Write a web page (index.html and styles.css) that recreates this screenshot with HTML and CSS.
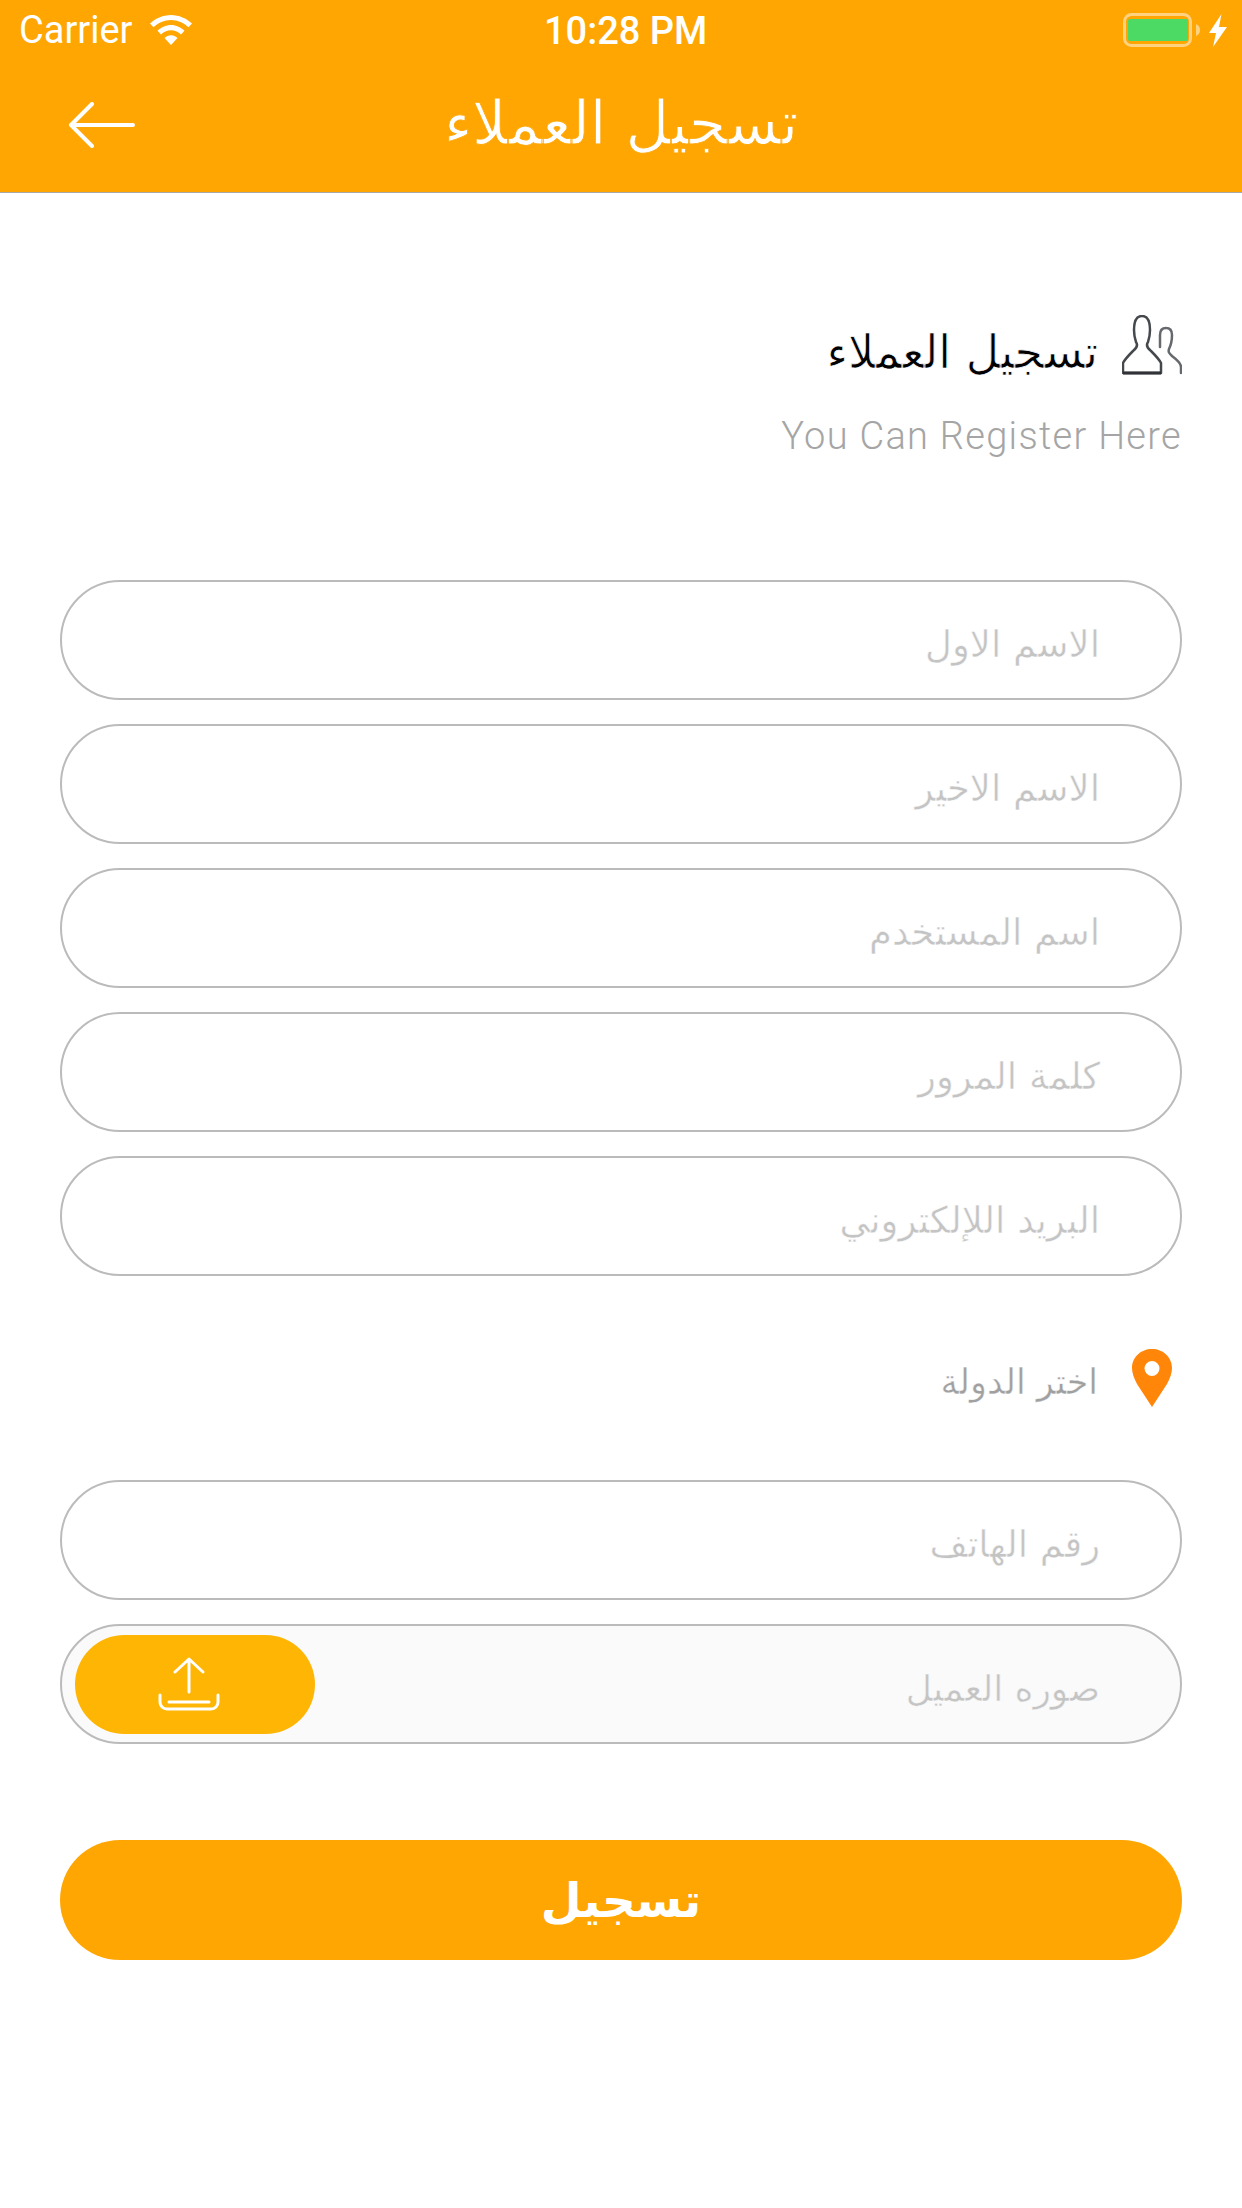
FILE: index.html
```html
<!DOCTYPE html>
<html lang="ar">
<head>
<meta charset="utf-8">
<title>تسجيل العملاء</title>
<link rel="stylesheet" href="styles.css">
</head>
<body>
<header class="appbar">
  <div class="status">
    <div class="status-left">
      <span class="carrier">Carrier</span>
      <svg class="wifi" width="42" height="30" viewBox="0 0 42 30"><path d="M0 8.500C5.500 3.500 13 0 21 0s15.500 3.500 21 8.500l-3.500 3.700C33.800 8 27.800 5 21 5S8.200 8 3.500 12.200z" fill="#fff"/><path d="M7.500 15.800C11 12.500 15.800 10 21 10s10 2.500 13.500 5.800L31 19.500c-2.500-2.300-6-4.200-10-4.200s-7.500 1.900-10 4.200z" fill="#fff"/><path d="M14.500 23c1.700-1.500 4-2.700 6.500-2.700s4.800 1.200 6.500 2.700L21 30z" fill="#fff"/></svg>
    </div>
    <span class="time">10:28 PM</span>
    <div class="status-right">
      <svg width="77" height="34" viewBox="0 0 77 34"><rect x="1.500" y="1.500" width="66" height="31" rx="7" fill="none" stroke="#ffd27f" stroke-width="3"/><rect x="5" y="6" width="60" height="22" rx="2" fill="#4cd964"/><path d="M73 11c2.500 1 4 3 4 6s-1.500 5-4 6z" fill="#ffd27f"/></svg>
      <svg width="18" height="33" viewBox="0 0 18 33"><path d="M12.500 0 0 19h7L4 33 18 13h-8z" fill="#fff"/></svg>
    </div>
  </div>
  <div class="navbar">
    <svg class="back" width="68" height="46" viewBox="0 0 68 46"><path d="M24 2 3 23l21 21M3 23h62" fill="none" stroke="#fff" stroke-width="4" stroke-linecap="round" stroke-linejoin="round"/></svg>
    <h1 class="nav-title" dir="rtl">تسجيل العملاء</h1>
  </div>
</header>
<main class="content">
  <section class="intro">
    <div class="intro-head">
      <svg class="people" width="60" height="60" viewBox="0 0 60 60"><path d="M1 58V48c2-4 6-8 10-12 4-3 5-6 3-9-1-3-2-6-2-12C12 6 15 1 20 1s8 5 8 14c0 6-1 9-2 12-2 3-1 6 3 9 4 4 8 8 10 12v10z" fill="none" stroke="#45494d" stroke-width="2.500" stroke-linejoin="round"/><path d="M1 58h38" stroke="#2f3236" stroke-width="3"/><path d="M38 32V20c0-4 2-7 6-7s6 3 6 7c0 6-1 10-3 14-1 3 0 4 3 7 4 3 9 7 9 11v6" fill="none" stroke="#65696d" stroke-width="2.500" stroke-linecap="round"/></svg>
      <h2 class="intro-title" dir="rtl">تسجيل العملاء</h2>
    </div>
    <p class="intro-sub">You Can Register Here</p>
  </section>
  <form class="fields">
    <div class="field" dir="rtl">الاسم الاول</div>
    <div class="field" dir="rtl">الاسم الاخير</div>
    <div class="field" dir="rtl">اسم المستخدم</div>
    <div class="field" dir="rtl">كلمة المرور</div>
    <div class="field" dir="rtl">البريد اللإلكتروني</div>
  </form>
  <div class="country">
    <svg width="40" height="58" viewBox="0 0 40 58"><path fill-rule="evenodd" d="M20 0c11 0 20 8 20 19 0 5-2 10-5 16L20 58 5 35C2 29 0 24 0 19 0 8 9 0 20 0zm0 12a7.500 7.500 0 1 0 0 15 7.500 7.500 0 0 0 0-15z" fill="#ff8609"/></svg>
    <span class="country-label" dir="rtl">اختر الدولة</span>
  </div>
  <div class="fields">
    <div class="field" dir="rtl">رقم الهاتف</div>
    <div class="field field-upload" dir="rtl">
      <span class="upload-label">صوره العميل</span>
      <span class="upload-btn">
        <svg width="62" height="56" viewBox="0 0 62 56"><path d="M31 36V3M17 16 31 3l14 13M2 39v7c0 4 3 7 7 7h44c4 0 7-3 7-7v-7M11 46h40" fill="none" stroke="#fff" stroke-width="3" stroke-linecap="round" stroke-linejoin="round"/></svg>
      </span>
    </div>
  </div>
  <button class="submit" type="button" dir="rtl">تسجيل</button>
</main>
</body>
</html>
```
FILE: styles.css
```css
* { box-sizing: border-box; }
html, body { margin: 0; padding: 0; background: #fff; }
body { width: 1242px; height: 2208px; overflow: hidden; font-family: "DejaVu Sans", sans-serif; }

.appbar { height: 193px; background: #ffa603; border-bottom: 1px solid #a8a8a8; color: #fff; }
.status { height: 60px; display: flex; align-items: center; justify-content: space-between; padding: 0 15px 0 19px; position: relative; }
.status-left { display: flex; align-items: center; gap: 18px; }
.carrier { font: 400 38px/44px Roboto, sans-serif; }
.time { position: absolute; left: 544px; top: 9px; font: 500 38px/44px Roboto, sans-serif; }
.status-right { display: flex; align-items: center; gap: 9px; }

.navbar { height: 132px; display: flex; align-items: center; padding: 0 0 2px 68px; position: relative; }
.nav-title { position: absolute; left: 0; right: 0; top: 28px; margin: 0; text-align: center; font-weight: 400; font-size: 60px; line-height: 70px; -webkit-text-stroke: 0.8px #ffa603; }

.content { padding: 0 60px; }
.intro { padding-top: 114px; height: 387px; }
.intro-head { display: flex; flex-direction: row-reverse; align-items: center; gap: 24px; }
.intro-title { margin: 0; padding-top: 14px; font-weight: 400; font-size: 46px; line-height: 62px; color: #000; -webkit-text-stroke: 0.7px #fff; }
.intro-sub { margin: 29px 0 0; text-align: right; font: 300 38px/48px Roboto, sans-serif; letter-spacing: 1.3px; color: #a5a5a5; }

.fields { display: flex; flex-direction: column; gap: 24px; }
.field { height: 120px; border: 2px solid #bbb; border-radius: 60px; display: flex; align-items: center; padding: 8px 80px 0; font-weight: 400; font-size: 37px; color: #c4c4c4; -webkit-text-stroke: 0.5px #fff; }
.field-upload { background: #fafafa; justify-content: space-between; padding: 0 80px 0 13px; -webkit-text-stroke: 0.5px #fafafa; }
.upload-label { padding-top: 8px; font-size: 36px; }
.upload-btn { width: 240px; height: 99px; border-radius: 50px; background: #ffb504; display: flex; align-items: center; justify-content: center; padding-right: 12px; }

.country { height: 204px; display: flex; flex-direction: row-reverse; align-items: center; gap: 34px; padding-right: 10px; }
.country-label { padding-top: 8px; font-weight: 400; font-size: 35px; color: #a0a0a0; -webkit-text-stroke: 0.4px #fff; }

.submit { width: 100%; height: 120px; margin-top: 96px; border: 0; border-radius: 60px; background: #ffa603; color: #fff; font-family: inherit; font-weight: 700; font-size: 47px; display: block; }
```
